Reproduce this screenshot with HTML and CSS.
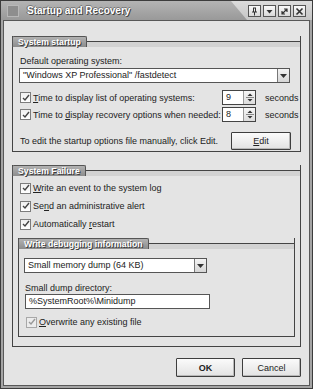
FILE: index.html
```html
<!DOCTYPE html>
<html lang="en">
<head>
    <meta charset="UTF-8">
    <title>Startup and Recovery</title>
    <link rel="stylesheet" href="styles.css">
</head>
<body>
    <div class="window">
        <div class="titlebar">
            <div class="title-tab">
                <span class="app-icon"></span>
                <span class="title-text">Startup and Recovery</span>
            </div>
            <div class="title-buttons">
                <span class="tbtn">
                    <svg width="9" height="9" viewBox="0 0 9 9"><path d="M3 1h3M3.5 1v4M5.5 1v4M2 5h5M4.5 5v3.5" stroke="#333" fill="none"/></svg>
                </span>
                <span class="tbtn">
                    <svg width="9" height="9" viewBox="0 0 9 9"><path d="M1.5 3h6L4.5 6.5z" fill="#333"/></svg>
                </span>
                <span class="tbtn">
                    <svg width="9" height="9" viewBox="0 0 9 9"><path d="M2 7L7 2M4 2h3v3M2 4v3h3" stroke="#333" fill="none" stroke-width="1.2"/></svg>
                </span>
                <span class="tbtn">
                    <svg width="9" height="9" viewBox="0 0 9 9"><path d="M1.5 1.5l6 6M7.5 1.5l-6 6" stroke="#333" stroke-width="1.6"/></svg>
                </span>
            </div>
        </div>

        <div class="client">
            <!-- System startup -->
            <div class="group">
                <div class="group-head"><span class="group-tab">System startup</span><span class="group-band"></span></div>
                <div class="group-body startup-body">
                    <div class="label">Default operating system:</div>
                    <div class="combo os-combo">
                        <span class="combo-text">"Windows XP Professional" /fastdetect</span>
                        <span class="combo-arrow"><svg width="7" height="4" viewBox="0 0 7 4"><path d="M0 0h7L3.5 4z" fill="#333"/></svg></span>
                    </div>
                    <div class="timer-row first">
                        <label class="check"><span class="box"><svg width="8" height="8" viewBox="0 0 8 8"><path d="M1 4l2 2 4-5" stroke="#444" stroke-width="1.4" fill="none"/></svg></span><span><u>T</u>ime to display list of operating systems:</span></label>
                        <div class="spinner"><span class="spin-value">9</span><span class="spin-arrows"><svg width="10" height="13" viewBox="0 0 10 13"><path d="M2.5 5h5L5 2.5z" fill="#333"/><path d="M1 6.5h8" stroke="#888"/><path d="M2.5 8h5L5 10.5z" fill="#333"/></svg></span></div>
                        <span class="unit">seconds</span>
                    </div>
                    <div class="timer-row">
                        <label class="check"><span class="box"><svg width="8" height="8" viewBox="0 0 8 8"><path d="M1 4l2 2 4-5" stroke="#444" stroke-width="1.4" fill="none"/></svg></span><span>Time to <u>d</u>isplay recovery options when needed:</span></label>
                        <div class="spinner"><span class="spin-value">8</span><span class="spin-arrows"><svg width="10" height="13" viewBox="0 0 10 13"><path d="M2.5 5h5L5 2.5z" fill="#333"/><path d="M1 6.5h8" stroke="#888"/><path d="M2.5 8h5L5 10.5z" fill="#333"/></svg></span></div>
                        <span class="unit">seconds</span>
                    </div>
                    <div class="edit-row">
                        <span>To edit the startup options file manually, click Edit.</span>
                        <button class="btn edit-btn"><u>E</u>dit</button>
                    </div>
                </div>
            </div>

            <!-- System Failure -->
            <div class="group failure">
                <div class="group-head"><span class="group-tab">System Failure</span><span class="group-band"></span></div>
                <div class="group-body failure-body">
                    <label class="check row"><span class="box"><svg width="8" height="8" viewBox="0 0 8 8"><path d="M1 4l2 2 4-5" stroke="#444" stroke-width="1.4" fill="none"/></svg></span><span><u>W</u>rite an event to the system log</span></label>
                    <label class="check row"><span class="box"><svg width="8" height="8" viewBox="0 0 8 8"><path d="M1 4l2 2 4-5" stroke="#444" stroke-width="1.4" fill="none"/></svg></span><span>Se<u>n</u>d an administrative alert</span></label>
                    <label class="check row"><span class="box"><svg width="8" height="8" viewBox="0 0 8 8"><path d="M1 4l2 2 4-5" stroke="#444" stroke-width="1.4" fill="none"/></svg></span><span>Automatically <u>r</u>estart</span></label>

                    <div class="group debug">
                        <div class="group-head"><span class="group-tab">Write debugging information</span><span class="group-band"></span></div>
                        <div class="group-body debug-body">
                            <div class="combo dump-combo">
                                <span class="combo-text">Small memory dump (64 KB)</span>
                                <span class="combo-arrow"><svg width="7" height="4" viewBox="0 0 7 4"><path d="M0 0h7L3.5 4z" fill="#333"/></svg></span>
                            </div>
                            <div class="label dir-label">Small dump directory:</div>
                            <div class="textbox">%SystemRoot%\Minidump</div>
                            <label class="check row disabled"><span class="box"><svg width="8" height="8" viewBox="0 0 8 8"><path d="M1 4l2 2 4-5" stroke="#999" stroke-width="1.4" fill="none"/></svg></span><span><u>O</u>verwrite any existing file</span></label>
                        </div>
                    </div>
                </div>
            </div>

            <div class="dialog-buttons">
                <button class="btn ok-btn">OK</button>
                <button class="btn">Cancel</button>
            </div>
        </div>
    </div>
</body>
</html>
```

FILE: styles.css
```css
* {
    box-sizing: border-box;
}
body {
    margin: 0;
    font-family: 'Liberation Sans', Arial, sans-serif;
    font-size: 9px;
    color: #222;
    background: #fff;
}
u {
    text-decoration: underline;
    text-underline-offset: 1px;
}
.window {
    width: 313px;
    height: 389px;
    border: 1px solid #3c3c3c;
    background: #a4a4a4;
    padding: 0 2px 2px;
    display: flex;
    flex-direction: column;
}
.titlebar {
    height: 19px;
    margin: 0 -2px;
    display: flex;
    background: linear-gradient(#dcdcdc, #c6c6c6);
    position: relative;
}
.title-tab {
    width: 246px;
    display: flex;
    align-items: center;
    gap: 8px;
    padding-left: 6px;
    background: linear-gradient(#b4b4b4, #999);
    clip-path: polygon(0 0, 230px 0, 246px 100%, 0 100%);
}
.app-icon {
    width: 12px;
    height: 12px;
    background: #8e8e8e;
    border: 1px solid #b8b8b8;
}
.title-text {
    font-weight: bold;
    font-size: 10px;
    color: #fff;
    text-shadow: 1px 1px 0 #444, -1px 0 0 #666, 0 -1px 0 #777;
}
.title-buttons {
    display: flex;
    gap: 2px;
    padding: 4px 0 0 1px;
}
.tbtn {
    width: 13px;
    height: 12px;
    border: 1px solid #555;
    background: linear-gradient(#fafafa, #d8d8d8);
    display: flex;
    align-items: center;
    justify-content: center;
}
.client {
    flex: 1;
    border: 1px solid #585858;
    background: #e4e4e4;
    padding: 15px 8px 0;
}

/* group boxes */
.group {
    border: 1px solid #444;
    border-top: none;
}
.group-head {
    display: flex;
    height: 11px;
    margin: 0 -1px;
}
.group-tab {
    height: 11px;
    padding: 0 5px 0 5px;
    border: 1px solid #555;
    border-bottom: none;
    border-radius: 2px 2px 0 0;
    background: linear-gradient(#b2b2b2, #8c8c8c);
    color: #fff;
    font-weight: bold;
    font-size: 8.7px;
    line-height: 10px;
    text-shadow: 1px 1px 0 #3a3a3a;
    white-space: nowrap;
}
.group-band {
    flex: 1;
    margin-top: 5px;
    border-top: 1px solid #444;
    border-right: 1px solid #444;
    background: #d2d2d2;
}
.group-body {
    padding: 8px 0 1px 6px;
}
.label {
    line-height: 12px;
    padding-left: 1px;
}

/* combo boxes and edits */
.combo {
    display: flex;
    height: 15px;
    border: 1px solid #555;
    background: #fff;
    margin-top: 1px;
}
.os-combo {
    width: 271px;
}
.combo-text {
    flex: 1;
    line-height: 13px;
    padding-left: 3px;
    white-space: nowrap;
}
.combo-arrow {
    width: 12px;
    border-left: 1px solid #777;
    background: linear-gradient(#f4f4f4, #d6d6d6);
    display: flex;
    align-items: center;
    justify-content: center;
}
.timer-row {
    display: grid;
    grid-template-columns: 1fr 34px 44px;
    align-items: center;
    height: 15px;
    margin-top: 2px;
}
.timer-row.first {
    margin-top: 7px;
}
.check {
    display: flex;
    align-items: center;
    gap: 2px;
    line-height: 12px;
    white-space: nowrap;
}
.check .box {
    width: 11px;
    height: 11px;
    border: 1px solid #7c7c7c;
    background: linear-gradient(#f0f0f0, #fff);
    display: flex;
    align-items: center;
    justify-content: center;
}
.timer-row .check {
    padding-left: 1px;
}
.spinner {
    display: flex;
    height: 15px;
    border: 1px solid #444;
    background: #fff;
}
.spin-value {
    flex: 1;
    line-height: 13px;
    padding-left: 3px;
}
.spin-arrows {
    width: 12px;
    border-left: 1px solid #999;
    background: linear-gradient(#f6f6f6, #dcdcdc);
    display: flex;
    justify-content: center;
}
.unit {
    padding-left: 9px;
}
.edit-row {
    display: flex;
    align-items: center;
    justify-content: space-between;
    margin-top: 10px;
    padding: 0 9px 0 1px;
}

/* buttons */
.btn {
    font-family: inherit;
    font-size: 9px;
    color: #222;
    height: 19px;
    width: 59px;
    padding: 0;
    border: 1px solid #3e3e3e;
    border-radius: 1px;
    background: linear-gradient(#fbfbfb, #e2e2e2);
    box-shadow: inset -1px -1px 0 #b8b8b8;
}
.edit-btn {
    height: 18px;
    width: 60px;
}
.ok-btn {
    font-weight: bold;
}

/* system failure */
.failure {
    margin-top: 13px;
}
.failure-body {
    padding: 6px 5px 9px 5px;
}
.check.row {
    height: 12px;
    margin-top: 6px;
    padding-left: 2px;
}
.failure-body > .check.row:first-child {
    margin-top: 0;
}
.debug {
    margin-top: 8px;
}
.debug .group-body {
    padding: 9px 0 8px 5px;
}
.dump-combo {
    width: 183px;
    margin-top: 0;
}
.dir-label {
    margin-top: 9px;
}
.textbox {
    width: 185px;
    height: 15px;
    border: 1px solid #555;
    background: #fff;
    line-height: 13px;
    padding-left: 3px;
    margin-left: 1px;
}
.debug-body .check.row {
    margin-top: 7px;
}
.check.disabled .box {
    border-color: #a8a8a8;
    background: #ececec;
}
.dialog-buttons {
    display: flex;
    justify-content: flex-end;
    gap: 7px;
    margin-top: 11px;
}
```
